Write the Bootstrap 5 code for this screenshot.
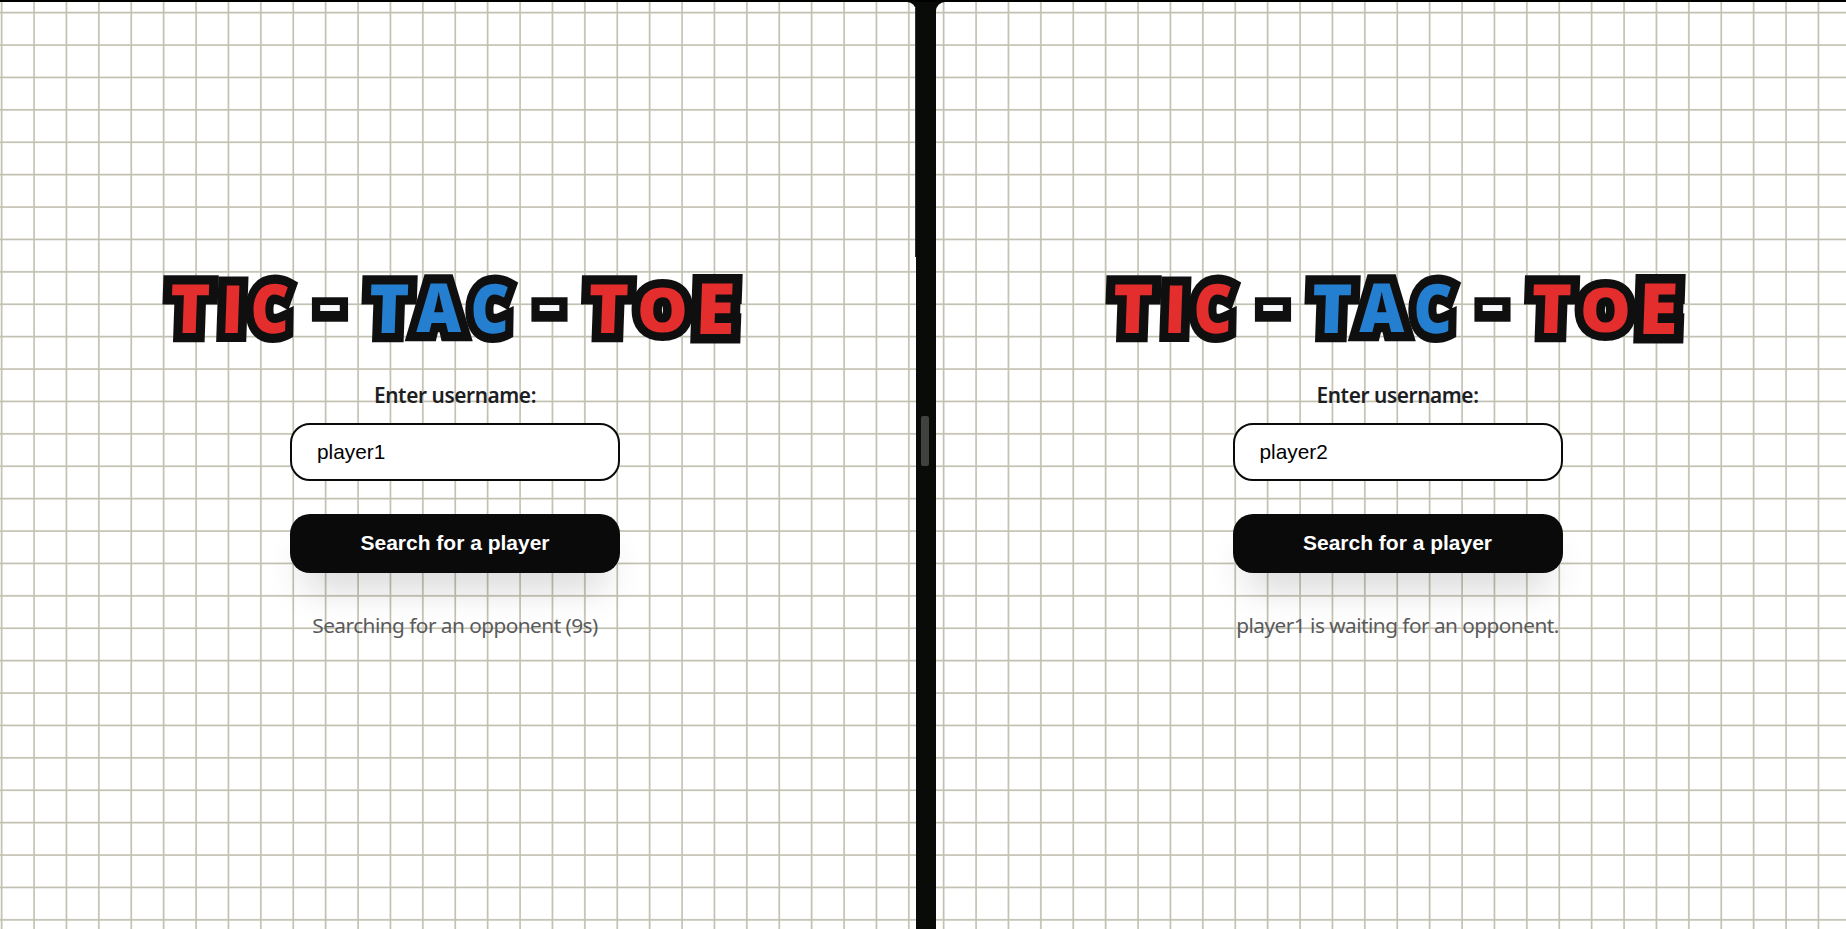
<!DOCTYPE html>
<html lang="en">
<head>
<meta charset="utf-8">
<title>Tic-Tac-Toe</title>
<link href="https://cdn.jsdelivr.net/npm/bootstrap@5.3.0/dist/css/bootstrap.min.css" rel="stylesheet">
<style>
body { background: #000; }
.screen { background: #090b09; padding-top: 2px; box-shadow: inset 0 2px #000; }
.pane {
  --line: #c3c1b2;
  background-color: #fff;
  background-image:
    repeating-linear-gradient(90deg, var(--line) 0, var(--line) .6px, transparent 1.6px, transparent 31.2px, var(--line) 32.4px),
    repeating-linear-gradient(180deg, var(--line) 0, var(--line) .6px, transparent 1.6px, transparent 31.2px, var(--line) 32.4px);
  background-repeat: no-repeat;
  background-size: 1000px 1100px;
}
.pane-one { width: 916px; border-top-right-radius: 9px; background-position: -31px -22px; padding-right: 6px; }
.pane-two { width: 910px; border-top-left-radius: 9px; background-position: -25px -22px; }
.pane-two .lobby { width: 923px; }
.lobby { padding-top: 263px; }
.gutter { width: 20px; }
.gutter-edge { left: -1px; top: 6px; width: 1px; height: 249px; background: #2d2f2d; }
.grip { width: 8px; height: 50px; margin-top: 414px; margin-left: -2px; background: #404240; border-radius: 2px; }
.logo { width: 600px; height: 90px; margin-left: -6px; display: block; overflow: visible; }
.logo text { font-family: "Open Sans", sans-serif; font-weight: 800; font-size: 68px; text-anchor: middle; }
.rim text { fill: #0f0f0f; stroke: #0f0f0f; stroke-width: 18.5px; stroke-linejoin: miter; stroke-miterlimit: 2.5; }
.red { fill: #e42d2d; } .blue { fill: #247fd0; } .dash { fill: #f5f7f9; }
.field-label, .status { font-family: "Noto Sans", sans-serif; line-height: 28px; white-space: nowrap; font-size: 20.8px; }
.field-label { font-weight: 600; color: #1d2023; letter-spacing: -.4px; margin: 26px 0 14px; }
.field, .go { width: 330px; border-radius: 20px; font-family: "Liberation Sans", sans-serif; font-size: 20.8px; }
.field, .field:focus { height: 58px; border: 2px solid #0a0a0a; padding: 0 25px; color: #000; background: #fff; }
.go, .go:hover { height: 59px; margin-top: 33px; padding: 0 0 2px; border: 0; background: #0a0a0a; color: #fff; font-size: 21px; font-weight: 700; box-shadow: 0 26px 38px -14px rgba(0,0,0,.2); }
.status { letter-spacing: -.53px; color: #5a5a5a; margin: 38px 0 0; }
</style>
</head>
<body>
<main class="screen d-flex vh-100 overflow-hidden">
  <section class="pane pane-one flex-shrink-0 overflow-hidden">
    <div class="lobby d-flex flex-column align-items-center">
      <svg class="logo" viewBox="0 0 600 90" role="img" aria-label="Tic - Tac - Toe"></svg>
      <label class="field-label" for="name1">Enter username:</label>
      <input id="name1" class="field form-control" value="player1">
      <button class="go btn" type="button">Search for a player</button>
      <p class="status">Searching for an opponent (9s)</p>
    </div>
  </section>
  <div class="gutter position-relative d-flex justify-content-center align-items-start flex-shrink-0">
    <span class="gutter-edge position-absolute"></span>
    <span class="grip"></span>
  </div>
  <section class="pane pane-two flex-shrink-0 overflow-hidden">
    <div class="lobby d-flex flex-column align-items-center">
      <svg class="logo" viewBox="0 0 600 90" role="img" aria-label="Tic - Tac - Toe"></svg>
      <label class="field-label" for="name2">Enter username:</label>
      <input id="name2" class="field form-control" value="player2">
      <button class="go btn" type="button">Search for a player</button>
      <p class="status">player1 is waiting for an opponent.</p>
    </div>
  </section>
</main>
<script src="https://cdn.jsdelivr.net/npm/bootstrap@5.3.0/dist/js/bootstrap.bundle.min.js"></script>
<script>
// letter, centre x, baseline, skew, x scale, y scale, colour
const letters = [
  ['T', 37, 67.7, -2, 1, 1, 'red'], ['I', 79.5, 67.5, -2, .95, .98, 'red'], ['C', 117.5, 67.7, -1, .88, 1, 'red'],
  ['-', 177.9, 54, 0, 1.04, .56, 'dash'],
  ['T', 236, 67.7, -2, 1, 1, 'blue'], ['A', 286.6, 67.2, 0, .91, .99, 'blue'], ['C', 337.5, 67.7, -1, .88, 1, 'blue'],
  ['-', 397.5, 54, 0, 1.04, .56, 'dash'],
  ['T', 455.5, 67.7, -2, 1, 1, 'red'], ['O', 510.4, 67.1, 0, .94, .92, 'red'], ['E', 562.5, 68.7, -2, 1.06, 1.04, 'red']
];
// the dash keeps a deeper rim than its flat face would give it
const rimShape = l => l[0] === '-' ? ['-', l[1], 59.8, 0, .97, .85] : l;
const draw = coloured => letters.map(l => {
  const [c, x, y, k, sx, sy] = coloured ? l : rimShape(l);
  return `<text${coloured ? ` class="${l[6]}"` : ''} transform="translate(${x} ${y}) skewX(${k}) scale(${sx} ${sy})">${c}</text>`;
}).join('');
document.querySelectorAll('.logo').forEach(logo => {
  logo.innerHTML = `<g class="rim">${draw(false)}</g><g>${draw(true)}</g>`;
});
</script>
</body>
</html>
